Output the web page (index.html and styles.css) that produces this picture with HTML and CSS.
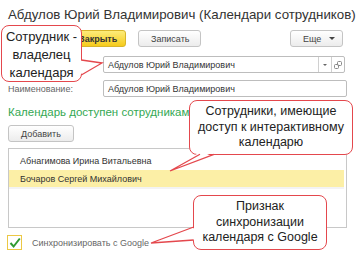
FILE: index.html
```html
<!DOCTYPE html>
<html lang="ru">
<head>
  <meta charset="UTF-8">
  <meta name="viewport" content="width=device-width, initial-scale=1.0">
  <title>Календари сотрудников</title>
  <link rel="stylesheet" href="styles.css">
</head>
<body>
  <div class="page">
    <h1 class="title">Абдулов Юрий Владимирович (Календари сотрудников)</h1>

    <div class="toolbar">
      <button class="btn btn-default">Закрыть</button>
      <button class="btn btn-save">Записать</button>
      <button class="btn btn-more">Еще <span class="tri"></span></button>
    </div>

    <div class="row row-owner">
      <span class="label"></span>
      <div class="field field-select">
        <span class="value">Абдулов Юрий Владимирович</span>
        <span class="cell"><span class="tri tri-small"></span></span>
        <span class="cell">
          <svg width="8" height="8" viewBox="0 0 8 8">
            <rect x="0.5" y="3.5" width="4" height="4" rx="1" fill="none" stroke="#888"/>
            <rect x="3.5" y="0.5" width="4" height="4" rx="1" fill="none" stroke="#888"/>
          </svg>
        </span>
      </div>
    </div>

    <div class="row row-name">
      <span class="label">Наименование:</span>
      <div class="field">
        <span class="value">Абдулов Юрий Владимирович</span>
      </div>
    </div>

    <div class="group-title">Календарь доступен сотрудникам:</div>

    <button class="btn btn-add">Добавить</button>

    <div class="list">
      <div class="list-row first">Абнагимова Ирина Витальевна</div>
      <div class="list-row current">Бочаров Сергей Михайлович</div>
    </div>

    <div class="check-row">
      <span class="checkbox">
        <svg width="12" height="12" viewBox="0 0 12 12">
          <path d="M1.5 6 L4.6 9.5 L10.8 1.5" fill="none" stroke="#2f9a32" stroke-width="2"/>
        </svg>
      </span>
      <span class="check-label">Синхронизировать с Google</span>
    </div>
  </div>

  <div class="callout callout-owner">Сотрудник -<br>владелец<br>календаря</div>
  <div class="callout callout-access">Сотрудники, имеющие<br>доступ к интерактивному<br>календарю</div>
  <div class="callout callout-sync">Признак<br>синхронизации<br>календаря с Google</div>

  <svg class="tails" width="360" height="259" viewBox="0 0 360 259">
    <polygon points="79,60 102,63 79,75" fill="#fff"/>
    <polyline points="81.3,60 102,63 81.3,75" fill="none" stroke="#e4484d" stroke-width="1.3"/>
    <polygon points="200,152 170,171 214,152" fill="#fff"/>
    <polyline points="200,154.3 170,171 214,154.3" fill="none" stroke="#e4484d" stroke-width="1.3"/>
    <polygon points="197,227 151,243 197,240" fill="#fff"/>
    <polyline points="193.7,227 151,243 193.7,240" fill="none" stroke="#e4484d" stroke-width="1.3"/>
  </svg>
</body>
</html>
```

FILE: styles.css
```css
body {
  margin: 0;
  font-family: 'Liberation Sans', Arial, sans-serif;
  background: #fff;
  color: #333;
  position: relative;
  width: 360px;
  height: 259px;
  overflow: hidden;
}
.page {
  padding: 6px 13px 0 8px;
}
.title {
  margin: 0;
  font-size: 13.3px;
  font-weight: normal;
  line-height: 18px;
  color: #333;
  white-space: nowrap;
}
.toolbar {
  display: flex;
  gap: 12px;
  margin-top: 6px;
  height: 17px;
}
.btn {
  font-family: inherit;
  font-size: 9px;
  height: 17px;
  padding: 0 12px;
  border: 1px solid #c4c4c4;
  border-radius: 3px;
  background: linear-gradient(#ffffff, #ececec);
  color: #444;
  cursor: pointer;
}
.btn-default {
  margin-left: 58px;
  width: 60px;
  font-weight: bold;
  color: #333;
  border-color: #d8b52a;
  background: linear-gradient(#fdec7a, #f6cb1c);
}
.btn-save {
  width: 63px;
}
.btn-more {
  margin-left: auto;
  margin-right: 4px;
  width: 53px;
  display: flex;
  align-items: center;
  justify-content: space-between;
  padding: 0 7px 0 12px;
}
.tri {
  display: inline-block;
  width: 0;
  height: 0;
  border-left: 3px solid transparent;
  border-right: 3px solid transparent;
  border-top: 3px solid #444;
}
.tri-small {
  border-left-width: 2px;
  border-right-width: 2px;
  border-top-width: 2px;
  border-top-color: #666;
}
.row {
  display: flex;
  align-items: center;
  height: 17px;
}
.row-owner { margin-top: 9px; }
.row-name { margin-top: 7px; }
.label {
  width: 95px;
  font-size: 9px;
  color: #666;
}
.field {
  flex: 1;
  height: 17px;
  box-sizing: border-box;
  border: 1px solid #bdbdbd;
  border-radius: 2px;
  display: flex;
  align-items: center;
  font-size: 9px;
  color: #333;
}
.field-select {
  margin-right: 2px;
}
.value {
  flex: 1;
  padding-left: 4px;
}
.cell {
  width: 12px;
  height: 100%;
  border-left: 1px solid #d0d0d0;
  display: flex;
  align-items: center;
  justify-content: center;
}
.group-title {
  margin-top: 7px;
  font-size: 11.5px;
  line-height: 16px;
  color: #34a853;
}
.btn-add {
  display: block;
  margin-top: 5px;
  width: 66px;
  padding: 0;
}
.list {
  margin-top: 6px;
  height: 80px;
  box-sizing: border-box;
  border: 1px solid #c8c8c8;
  padding-top: 2px;
  font-size: 9px;
  color: #333;
}
.list-row {
  display: flex;
  align-items: center;
  padding-left: 11px;
  height: 17px;
  margin-right: 2px;
}
.list-row.first {
  height: 19px;
}
.list-row.current {
  background: #fcefa6;
  border-bottom: 2px solid #f3f3f3;
}
.check-row {
  display: flex;
  align-items: center;
  margin-top: 7px;
  height: 15px;
}
.checkbox {
  width: 15px;
  height: 15px;
  box-sizing: border-box;
  margin-left: -1px;
  border: 1px solid #ecc845;
  background: #fff;
  display: flex;
  align-items: center;
  justify-content: center;
}
.check-label {
  margin-left: 10px;
  font-size: 9px;
  color: #666;
}
.callout {
  position: absolute;
  box-sizing: border-box;
  border: 1.5px solid #e4484d;
  border-radius: 8px;
  background: #fff;
  color: #222;
  text-align: center;
  display: flex;
  align-items: center;
  justify-content: center;
  white-space: nowrap;
}
.callout-owner {
  left: 1px;
  top: 25px;
  width: 81px;
  height: 57px;
  font-size: 13px;
  line-height: 18px;
  padding-top: 2px;
}
.callout-access {
  left: 189px;
  top: 100px;
  width: 164px;
  height: 55px;
  font-size: 12.5px;
  line-height: 15.5px;
}
.callout-sync {
  left: 193px;
  top: 195px;
  width: 134px;
  height: 55px;
  font-size: 12.5px;
  line-height: 15.5px;
}
.tails {
  position: absolute;
  left: 0;
  top: 0;
  pointer-events: none;
}
```
